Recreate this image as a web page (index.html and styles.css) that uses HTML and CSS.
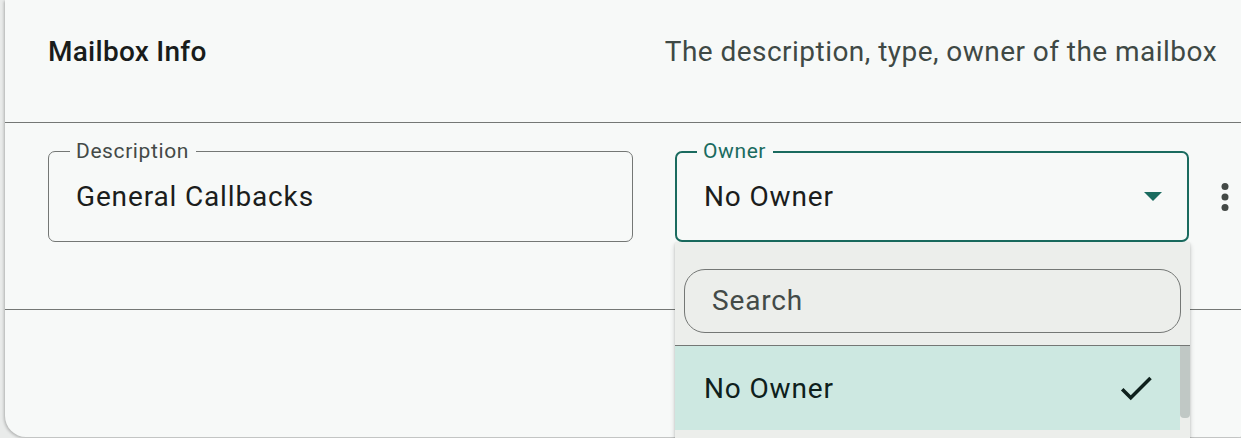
FILE: index.html
```html
<!DOCTYPE html>
<html lang="en">
<head>
<meta charset="utf-8">
<title>Mailbox Info</title>
<link rel="stylesheet" href="styles.css">
</head>
<body>
<div class="card">
  <header class="card-header">
    <h2 class="title">Mailbox Info</h2>
    <p class="subtitle">The description, type, owner of the mailbox</p>
  </header>
  <div class="divider"></div>
  <section class="form-row">
    <div class="field field-desc">
      <span class="label">Description</span>
      <span class="value">General Callbacks</span>
    </div>
    <div class="select-wrap">
      <div class="field field-owner">
        <span class="label label-owner">Owner</span>
        <span class="value">No Owner</span>
        <svg class="arrow" width="18" height="9" viewBox="0 0 18 9"><path d="M0 0h18L9 9z" fill="#1a6b5f"/></svg>
      </div>
      <div class="panel">
        <div class="search"><span class="placeholder">Search</span></div>
        <div class="panel-divider"></div>
        <div class="list">
          <div class="options">
            <div class="option selected">
              <span>No Owner</span>
              <svg class="check" width="42" height="42" viewBox="0 0 24 24"><path d="M9 16.17L4.83 12l-1.42 1.41L9 19 21 7l-1.41-1.41z" fill="#0e201c"/></svg>
            </div>
          </div>
          <div class="scrollbar"><div class="thumb"></div></div>
        </div>
      </div>
    </div>
    <button class="kebab" aria-label="More">
      <svg width="42" height="42" viewBox="0 0 24 24"><circle cx="12" cy="6" r="2" fill="#434946"/><circle cx="12" cy="12" r="2" fill="#434946"/><circle cx="12" cy="18" r="2" fill="#434946"/></svg>
    </button>
  </section>
  <div class="divider"></div>
  <div class="card-footer"></div>
</div>
</body>
</html>
```
FILE: styles.css
```css
html, body {
  margin: 0;
  padding: 0;
  height: 100%;
  overflow: hidden;
}
body {
  background: #e9ebea;
  font-family: Roboto, "Noto Sans", sans-serif;
  color: #191c1b;
  padding-left: 5px;
  box-sizing: border-box;
}
.card {
  width: 1254px;
  height: 437px;
  background: #f7f9f8;
  border-radius: 0 0 21px 21px;
  box-shadow: -1px 1px 3px rgba(0,0,0,0.25);
  display: flex;
  flex-direction: column;
}
.card-header {
  display: flex;
  justify-content: space-between;
  align-items: baseline;
  padding: 31px 42px 0 43px;
  height: 91px;
}
.title {
  margin: 0;
  font-size: 28px;
  line-height: 42px;
  font-weight: 500;
  letter-spacing: 0.26px;
  color: #191c1b;
}
.subtitle {
  margin: 0;
  font-size: 28px;
  line-height: 42px;
  font-weight: 400;
  letter-spacing: 0.46px;
  color: #3f4945;
}
.divider {
  height: 1px;
  background: #747775;
}
.form-row {
  display: flex;
  align-items: center;
  padding: 28px 0 67px 43px;
}
.field {
  position: relative;
  box-sizing: border-box;
  height: 91px;
  display: flex;
  align-items: center;
  border: 1px solid #747775;
  border-radius: 7px;
}
.field-desc {
  width: 585px;
  padding: 0 27px;
}
.select-wrap {
  position: relative;
  margin-left: 42px;
}
.field-owner {
  width: 514px;
  border: 2px solid #1a6b5f;
  padding: 0 25px 0 27px;
}
.label {
  position: absolute;
  top: -15px;
  left: 21px;
  padding: 0 7px 0 6px;
  background: #f7f9f8;
  font-size: 21px;
  line-height: 28px;
  letter-spacing: 0.6px;
  color: #444a47;
}
.label-owner {
  top: -16px;
  left: 20px;
  color: #1a6b5f;
}
.value {
  flex: 1;
  font-size: 28px;
  line-height: 42px;
  letter-spacing: 0.85px;
  color: #1b1d1c;
}
.arrow {
  display: block;
}
.kebab {
  margin-left: 15px;
  padding: 0;
  border: 0;
  background: none;
  width: 42px;
  height: 42px;
}
.kebab svg {
  display: block;
}
.panel {
  position: absolute;
  top: 100%;
  left: 0;
  width: 515px;
  height: 196px;
  background: #eceeeb;
  box-shadow: 0 3px 5px rgba(0,0,0,0.2), 0 1px 2px rgba(0,0,0,0.12);
  padding-top: 27px;
  box-sizing: border-box;
  z-index: 2;
}
.search {
  box-sizing: border-box;
  margin: 0 9px;
  height: 64px;
  border: 1px solid #747775;
  border-radius: 21px;
  display: flex;
  align-items: center;
  padding-left: 27px;
}
.placeholder {
  font-size: 28px;
  line-height: 42px;
  letter-spacing: 0.85px;
  color: #434a47;
}
.panel-divider {
  margin-top: 12px;
  height: 1px;
  background: #747775;
}
.list {
  display: flex;
}
.options {
  flex: 1;
}
.option {
  height: 84px;
  display: flex;
  align-items: center;
  justify-content: space-between;
  padding: 0 23px 0 29px;
  font-size: 28px;
  letter-spacing: 0.85px;
  color: #0e201c;
}
.option.selected {
  background: #cde8e1;
}
.check {
  display: block;
}
.scrollbar {
  width: 10px;
}
.thumb {
  height: 72px;
  background: #c0c8c5;
  border-radius: 0 0 4px 4px;
}
.card-footer {
  flex: 1;
}
```
